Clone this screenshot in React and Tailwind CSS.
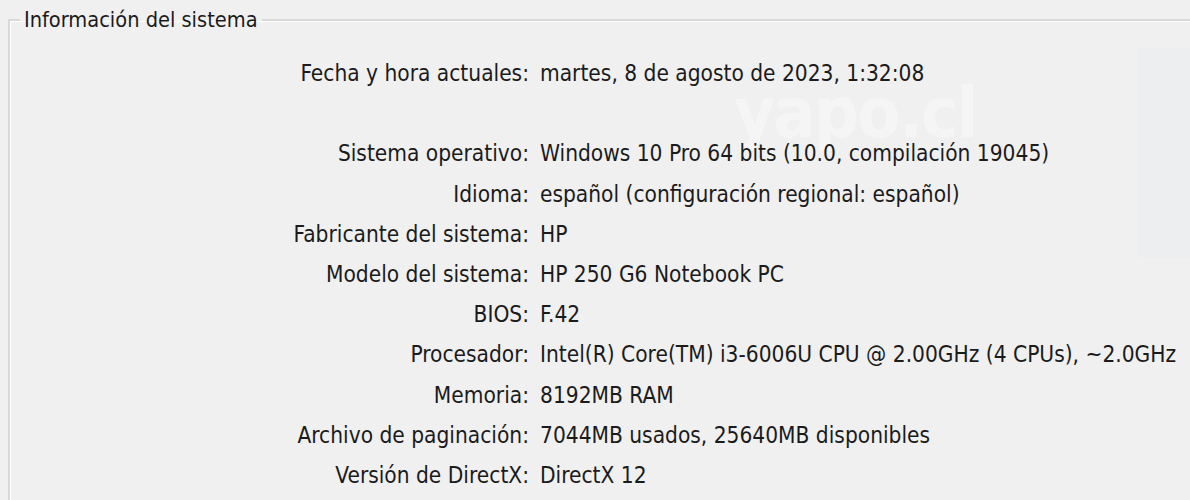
const rows = [
  ['Fecha y hora actuales:', 'martes, 8 de agosto de 2023, 1:32:08'],
  null,
  ['Sistema operativo:', 'Windows 10 Pro 64 bits (10.0, compilación 19045)'],
  ['Idioma:', 'español (configuración regional: español)'],
  ['Fabricante del sistema:', 'HP'],
  ['Modelo del sistema:', 'HP 250 G6 Notebook PC'],
  ['BIOS:', 'F.42'],
  ['Procesador:', 'Intel(R) Core(TM) i3-6006U CPU @ 2.00GHz (4 CPUs), ~2.0GHz'],
  ['Memoria:', '8192MB RAM'],
  ['Archivo de paginación:', '7044MB usados, 25640MB disponibles'],
  ['Versión de DirectX:', 'DirectX 12'],
]

export default function App() {
  return (
    <div className="relative h-[500px] w-[1190px] overflow-hidden bg-[#f0f0f0] text-[22.5px] text-[#1b1b1b] font-['DejaVu_Sans_Condensed','Liberation_Sans',sans-serif]">
      {/* faint watermark */}
      <div className="pointer-events-none absolute left-[734px] top-[86px] text-[70px] font-bold leading-[54px] tracking-tight text-white/35">
        yapo.cl
      </div>
      <div className="pointer-events-none absolute right-0 top-[48px] h-[210px] w-[52px] bg-[#e8ebf0]/30" />

      <fieldset className="relative ml-[8px] mt-[8px] h-[600px] w-[1300px] border-t-2 border-l-2 border-[#d9d9d9] shadow-[inset_1px_1px_0_#ffffff]">
        <legend className="ml-[10px] px-[4px] text-[21.6px] leading-[24px]">Información del sistema</legend>

        <div className="relative grid grid-cols-[519px_1fr] gap-x-[11px] pt-[21px] leading-[40.2px]">
          {rows.map((r, i) =>
            r ? (
              <div key={i} className="contents">
                <div className="whitespace-nowrap text-right">{r[0]}</div>
                <div className="whitespace-nowrap">{r[1]}</div>
              </div>
            ) : (
              <div key={i} className="col-span-2 h-[40.2px]" />
            )
          )}
        </div>
      </fieldset>
    </div>
  )
}
